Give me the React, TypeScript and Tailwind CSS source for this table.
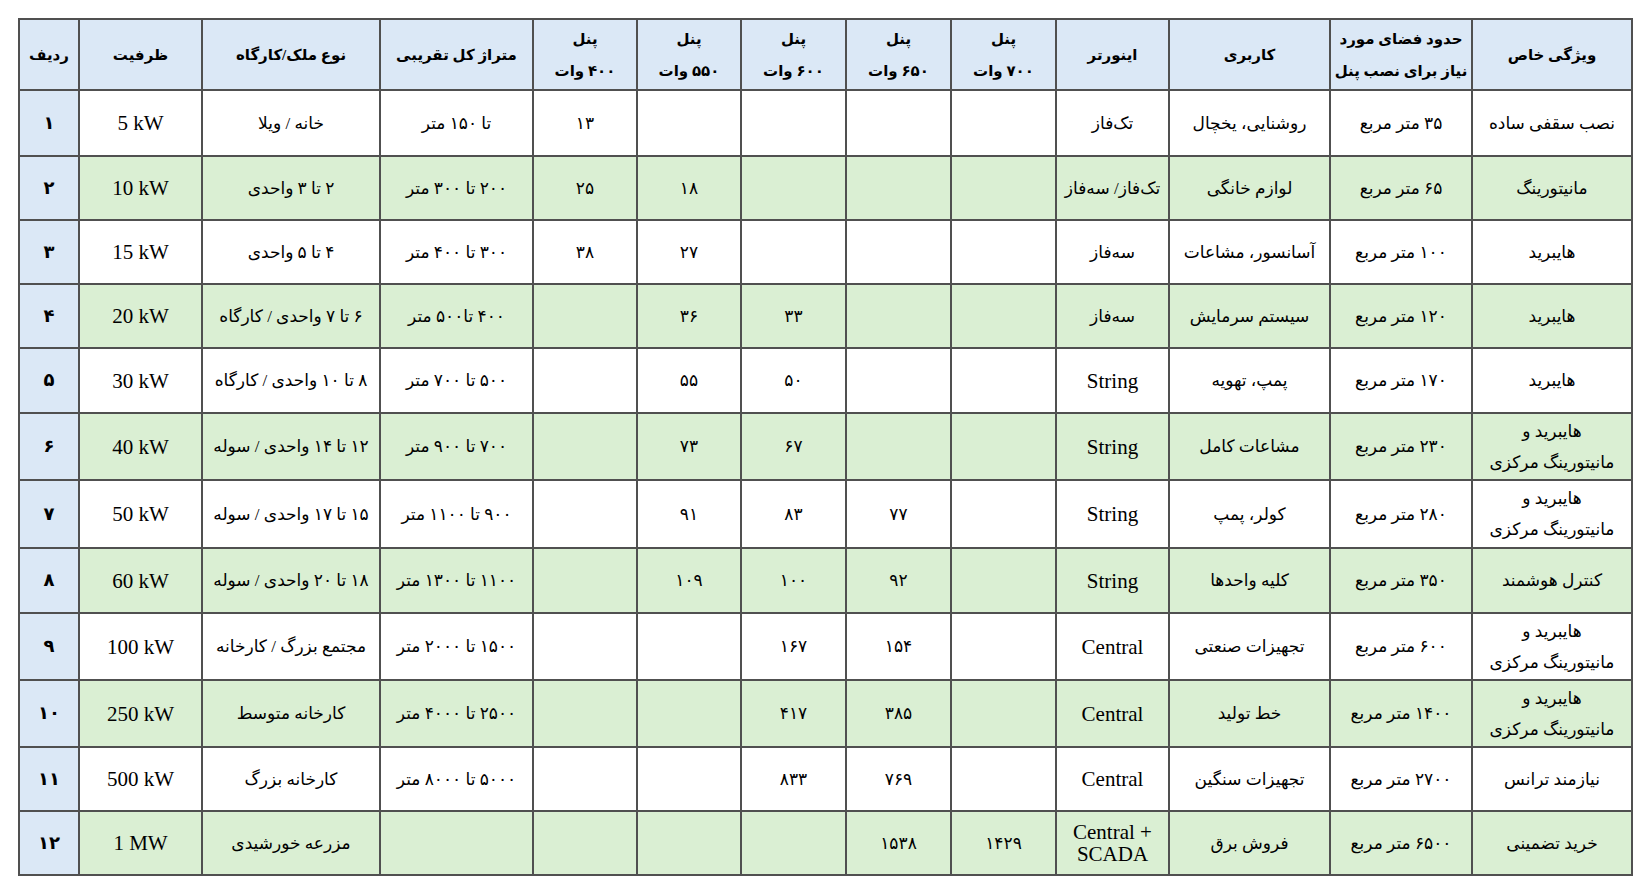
import React from "react";

const ZW = "\u200c";

type Cell = string | string[];

const headers: Cell[] = [
  "ردیف",
  "ظرفیت",
  "نوع ملک/کارگاه",
  "متراژ کل تقریبی",
  ["پنل", "۴۰۰ وات"],
  ["پنل", "۵۵۰ وات"],
  ["پنل", "۶۰۰ وات"],
  ["پنل", "۶۵۰ وات"],
  ["پنل", "۷۰۰ وات"],
  "اینورتر",
  "کاربری",
  ["حدود فضای مورد", "نیاز برای نصب پنل"],
  "ویژگی خاص",
];

const HM: string[] = ["هایبرید و", "مانیتورینگ مرکزی"];

const rows: Cell[][] = [
  ["۱", "5 kW", "خانه / ویلا", "تا ۱۵۰ متر", "۱۳", "", "", "", "", `تک${ZW}فاز`, "روشنایی، یخچال", "۳۵ متر مربع", "نصب سقفی ساده"],
  ["۲", "10 kW", "۲ تا ۳ واحدی", "۲۰۰ تا ۳۰۰ متر", "۲۵", "۱۸", "", "", "", `تک${ZW}فاز/ سه${ZW}فاز`, "لوازم خانگی", "۶۵ متر مربع", "مانیتورینگ"],
  ["۳", "15 kW", "۴ تا ۵ واحدی", "۳۰۰ تا ۴۰۰ متر", "۳۸", "۲۷", "", "", "", `سه${ZW}فاز`, "آسانسور، مشاعات", "۱۰۰ متر مربع", "هایبرید"],
  ["۴", "20 kW", "۶ تا ۷ واحدی / کارگاه", "۴۰۰ تا۵۰۰  متر", "", "۳۶", "۳۳", "", "", `سه${ZW}فاز`, "سیستم سرمایش", "۱۲۰ متر مربع", "هایبرید"],
  ["۵", "30 kW", "۸ تا ۱۰ واحدی / کارگاه", "۵۰۰ تا ۷۰۰ متر", "", "۵۵", "۵۰", "", "", "String", "پمپ، تهویه", "۱۷۰ متر مربع", "هایبرید"],
  ["۶", "40 kW", "۱۲ تا ۱۴ واحدی / سوله", "۷۰۰ تا ۹۰۰ متر", "", "۷۳", "۶۷", "", "", "String", "مشاعات کامل", "۲۳۰ متر مربع", HM],
  ["۷", "50 kW", "۱۵ تا ۱۷ واحدی / سوله", "۹۰۰ تا ۱۱۰۰ متر", "", "۹۱", "۸۳", "۷۷", "", "String", "کولر، پمپ", "۲۸۰ متر مربع", HM],
  ["۸", "60 kW", "۱۸ تا ۲۰ واحدی / سوله", "۱۱۰۰ تا ۱۳۰۰ متر", "", "۱۰۹", "۱۰۰", "۹۲", "", "String", "کلیه واحدها", "۳۵۰ متر مربع", "کنترل هوشمند"],
  ["۹", "100 kW", "مجتمع بزرگ / کارخانه", "۱۵۰۰ تا ۲۰۰۰ متر", "", "", "۱۶۷", "۱۵۴", "", "Central", "تجهیزات صنعتی", "۶۰۰ متر مربع", HM],
  ["۱۰", "250 kW", "کارخانه متوسط", "۲۵۰۰ تا ۴۰۰۰ متر", "", "", "۴۱۷", "۳۸۵", "", "Central", "خط تولید", "۱۴۰۰ متر مربع", HM],
  ["۱۱", "500 kW", "کارخانه بزرگ", "۵۰۰۰ تا ۸۰۰۰ متر", "", "", "۸۳۳", "۷۶۹", "", "Central", "تجهیزات سنگین", "۲۷۰۰ متر مربع", "نیازمند ترانس"],
  ["۱۲", "1 MW", "مزرعه خورشیدی", "", "", "", "", "۱۵۳۸", "۱۴۲۹", ["Central +", "SCADA"], "فروش برق", "۶۵۰۰ متر مربع", "خرید تضمینی"],
];

const colWidths = [60, 123, 178, 153, 104, 104, 105, 105, 105, 113, 161, 142, 160];
const rowHeights = [66, 64, 64, 64, 65, 67, 68, 65, 67, 67, 64, 64];

const isLatin = (s: string) => /^[A-Za-z0-9 +]+$/.test(s);

function renderCell(c: Cell) {
  if (Array.isArray(c)) {
    return c.map((l, i) => (
      <React.Fragment key={i}>
        {i > 0 && <br />}
        {l}
      </React.Fragment>
    ));
  }
  return c;
}

export default function App() {
  return (
    <div className="w-[1648px] h-[896px] overflow-hidden bg-white pt-[18px] pl-[18px] font-['Liberation_Serif','DejaVu_Sans',serif] text-black">
      <table className="border-collapse table-fixed w-[1615px]">
        <colgroup>
          {colWidths.map((w, i) => (
            <col key={i} style={{ width: w }} />
          ))}
        </colgroup>
        <thead>
          <tr>
            {headers.map((h, i) => (
              <th
                key={i}
                dir="rtl"
                className="h-[71px] border-2 border-[#505050] bg-[#dbe8f6] text-center align-middle font-bold text-[15px] leading-[32px] whitespace-nowrap p-0"
              >
                {renderCell(h)}
              </th>
            ))}
          </tr>
        </thead>
        <tbody>
          {rows.map((r, ri) => {
            const green = ri % 2 === 1;
            return (
              <tr key={ri}>
                {r.map((c, ci) => {
                  const first = Array.isArray(c) ? c[0] : c;
                  const latin = first !== "" && isLatin(first);
                  const bg =
                    ci === 0 ? "bg-[#dbe8f6]" : green ? "bg-[#daefd3]" : "bg-white";
                  const cls = [
                    "border-2 border-[#505050] text-center align-middle whitespace-nowrap p-0",
                    bg,
                    ci === 0 ? "font-bold text-[18px]" : latin ? "text-[21px]" : "text-[17px]",
                    latin ? "leading-[22px]" : "leading-[31px]",
                  ].join(" ");
                  return (
                    <td
                      key={ci}
                      dir={latin ? "ltr" : "rtl"}
                      className={cls}
                      style={{ height: rowHeights[ri] }}
                    >
                      {renderCell(c)}
                    </td>
                  );
                })}
              </tr>
            );
          })}
        </tbody>
      </table>
    </div>
  );
}
